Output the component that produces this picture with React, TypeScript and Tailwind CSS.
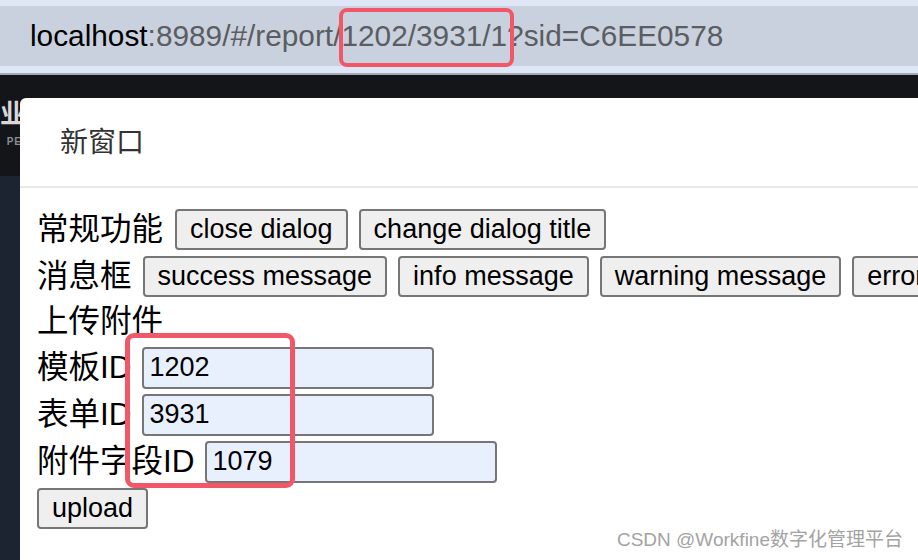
const font = { fontFamily: '"Liberation Sans", "Noto Sans CJK SC", sans-serif' };

const Btn = ({ label }: { label: string }) => (
  <button className="h-[41px] shrink-0 whitespace-nowrap rounded-[4px] border-2 border-[#767676] bg-[#efefef] px-[13px] text-[27px] leading-none text-black">
    {label}
  </button>
);

const Field = ({ label, value }: { label: string; value: string }) => (
  <div className="flex h-[41px] items-center gap-[10px]">
    <span className="text-[31.5px] leading-none text-black">{label}</span>
    <input
      readOnly
      value={value}
      className="h-[42px] w-[292px] rounded-[4px] border-2 border-[#767676] bg-[#e8f0fe] px-[6px] text-[27px] leading-none text-black outline-none"
    />
  </div>
);

export default function App() {
  return (
    <div className="relative flex h-[560px] w-[918px] flex-col overflow-hidden bg-[#131519]" style={font}>
      {/* browser address bar */}
      <div className="h-[6px] bg-[#dfe7f6]" />
      <div className="flex h-[60px] items-center bg-[#c9d1de] pl-[30px] text-[29.8px]">
        <span className="text-black">localhost</span>
        <span className="text-[#5b5d61]">:8989/#/report/1202/3931/1?sid=C6EE0578</span>
      </div>
      <div className="h-[7px] bg-[#dfe7f6]" />
      <div className="h-[2px] bg-[#a4abb7]" />

      <div className="flex flex-1">
        {/* left app sidebar peeking out */}
        <div className="flex w-[20px] flex-col">
          <div className="flex h-[101px] flex-col items-end overflow-hidden pt-[26px]">
            <span className="mr-[-6px] text-[26px] font-bold leading-none text-[#d8d8d8]">业</span>
            <span className="mr-[-2px] mt-[10px] text-[10px] font-bold leading-none tracking-[1px] text-[#8a8d93]">PE</span>
          </div>
          <div className="flex-1 bg-[#1c2331]" />
        </div>

        {/* dialog */}
        <div className="mt-[23px] flex flex-1 flex-col overflow-hidden rounded-tl-[6px] bg-white">
          <div className="flex h-[88px] items-center pl-[40px] pt-[2px] text-[28px] text-[#333]">新窗口</div>
          <div className="h-[2px] bg-[#e8e8e8]" />
          <div className="flex flex-col gap-[6px] pl-[17px] pt-[21px]">
            <div className="flex h-[41px] items-center gap-[11px]">
              <span className="mr-[1px] text-[31.5px] leading-none text-black">常规功能</span>
              <Btn label="close dialog" />
              <Btn label="change dialog title" />
            </div>
            <div className="flex h-[41px] items-center gap-[11px]">
              <span className="shrink-0 text-[31.5px] leading-none text-black">消息框</span>
              <Btn label="success message" />
              <Btn label="info message" />
              <Btn label="warning message" />
              <Btn label="error message" />
            </div>
            <div className="flex h-[38px] items-center text-[31.5px] leading-none text-black">上传附件</div>
            <Field label="模板ID" value="1202" />
            <Field label="表单ID" value="3931" />
            <Field label="附件字段ID" value="1079" />
            <div className="flex h-[41px] items-center">
              <Btn label="upload" />
            </div>
          </div>
        </div>
      </div>

      {/* annotation boxes */}
      <div className="absolute left-[339px] top-[8px] h-[59px] w-[175px] rounded-[8px] border-4 border-[#f25768]" />
      <div className="absolute left-[125px] top-[333px] h-[155px] w-[170px] rounded-[9px] border-[5px] border-[#f25768]" />

      {/* watermark */}
      <div className="absolute right-[15px] top-[530px] text-[19px] leading-none text-[#a3a3a3]">
        CSDN @Workfine数字化管理平台
      </div>
    </div>
  );
}
